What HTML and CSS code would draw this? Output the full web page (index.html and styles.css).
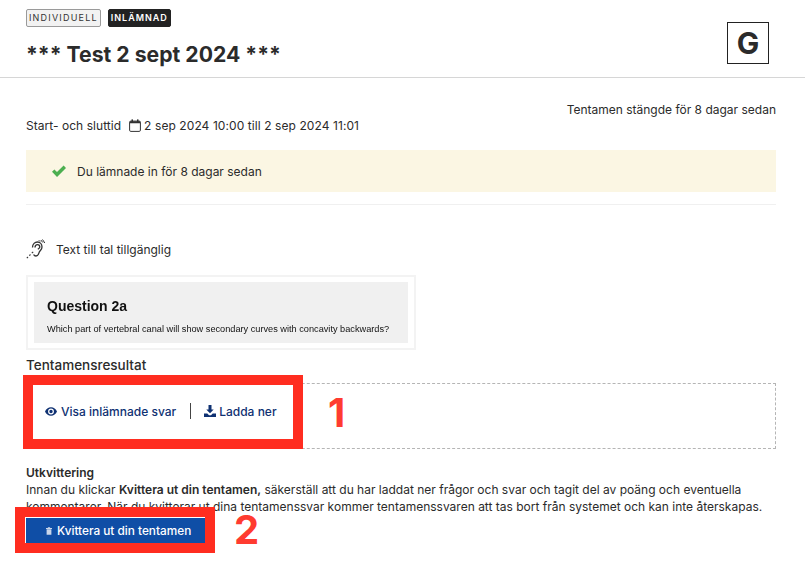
FILE: index.html
```html
<!DOCTYPE html>
<html lang="sv">
<head>
    <meta charset="UTF-8">
    <title>Test 2 sept 2024</title>
    <link rel="stylesheet" href="styles.css">
</head>
<body>
    <header class="header">
        <div class="header-left">
            <div class="tags">
                <span class="tag">INDIVIDUELL</span>
                <span class="tag tag-dark">INLÄMNAD</span>
            </div>
            <h1>*** Test 2 sept 2024 ***</h1>
        </div>
        <div class="grade">G</div>
    </header>

    <main class="content">
        <p class="closed">Tentamen stängde för 8 dagar sedan</p>
        <p class="times">
            <span class="times-label">Start- och sluttid</span>
            <svg class="cal" viewBox="0 0 12 13" width="12" height="13">
                <rect x="0.6" y="2.1" width="10.8" height="10.3" rx="1.2" fill="none" stroke="#333" stroke-width="1"/>
                <path d="M0.6 4.2h10.8V3.2a1 1 0 0 0-1-1H1.6a1 1 0 0 0-1 1z" fill="#333"/>
                <rect x="2.5" y="0.4" width="1.5" height="3" fill="#333"/>
                <rect x="8" y="0.4" width="1.5" height="3" fill="#333"/>
            </svg>
            <span>2 sep 2024 10:00 till 2 sep 2024 11:01</span>
        </p>

        <div class="notice">
            <svg viewBox="0 0 16 13" width="16" height="13">
                <path d="M1 6.800 3.400 4.400 6 7 12.600 0.600 15 3 6 12z" fill="#4caf50"/>
            </svg>
            <span>Du lämnade in för 8 dagar sedan</span>
        </div>

        <div class="tts">
            <svg viewBox="0 0 20 20" width="20" height="20" fill="none" stroke="#333" stroke-width="1.3">
                <path d="M6.500 8.500C6.500 4.800 9 3 11.500 3S16 5 16 8c0 2.600-2 3.400-2.700 5-.7 1.900-1 4-3.300 4-1.200 0-2-.6-2.400-1.500"/>
                <path d="M9 8.500C9 6.700 10.200 5.600 11.600 5.600S13.800 6.800 13.800 8c0 1.200-1.300 1.500-1.800 2.300"/>
                <path d="M0.800 19.200 2 18M3.300 16.700 4.500 15.500M5.800 14.200 7.200 12.800" stroke-width="1.100"/>
                <path d="M14.800 1 16.800 3.500M16.500 0.500 18.800 4M12.800 1.200 14 2.500" stroke-width="1"/>
            </svg>
            <span>Text till tal tillgänglig</span>
        </div>

        <div class="shot">
            <div class="shot-inner">
                <div class="shot-title">Question 2a</div>
                <div class="shot-text">Which part of vertebral canal will show secondary curves with concavity backwards?</div>
            </div>
        </div>

        <h2>Tentamensresultat</h2>
        <div class="results">
            <a href="#" class="res-link">
                <svg viewBox="0 0 14 10" width="12" height="9">
                    <path d="M7 0C3.800 0 1.200 2 0 5c1.200 3 3.800 5 7 5s5.800-2 7-5c-1.200-3-3.800-5-7-5zm0 8.400A3.400 3.400 0 1 1 7 1.600a3.400 3.400 0 0 1 0 6.800zM7 3a2 2 0 1 0 0 4 2 2 0 0 0 0-4z" fill="#0f3172"/>
                </svg>
                Visa inlämnade svar
            </a>
            <span class="sep"></span>
            <a href="#" class="res-link res-link-tight">
                <svg viewBox="0 0 12 12" width="12" height="12">
                    <path d="M4.500 0h3v4.500h2.200L6 8.300 2.300 4.500h2.200zM0 8.500h3.300L5 10.200h2l1.700-1.700H12V12H0z" fill="#0f3172"/>
                </svg>
                Ladda ner
            </a>
        </div>

        <div class="receipt">
            <strong>Utkvittering</strong><br>
            Innan du klickar <strong>Kvittera ut din tentamen,</strong> säkerställ att du har laddat ner frågor och svar och tagit del av poäng och eventuella kommentarer. När du kvitterar ut dina tentamenssvar kommer tentamenssvaren att tas bort från systemet och kan inte återskapas.
        </div>

        <button class="btn">
            <svg viewBox="0 0 8 10" width="6" height="8">
                <path d="M0 1h8v1.200H0zM2.500 0h3v1h-3zM0.800 2.600h6.400V10H0.800z" fill="#c9d6ea"/>
            </svg>
            Kvittera ut din tentamen
        </button>
    </main>

    <!-- annotations drawn on top of the screenshot -->
    <div class="mark mark-1"></div>
    <div class="mark-num num-1">1</div>
    <div class="mark mark-2"></div>
    <div class="mark-num num-2">2</div>
</body>
</html>
```

FILE: styles.css
```css
* {
    margin: 0;
    padding: 0;
    box-sizing: border-box;
}

body {
    font-family: 'Inter', 'Liberation Sans', sans-serif;
    font-size: 12px;
    line-height: 17px;
    color: #2b2b2b;
    background: #fff;
    position: relative;
    height: 561px;
    overflow: hidden;
}

/* Header */
.header {
    height: 78px;
    padding: 9px 36px 0 26px;
    border-bottom: 1px solid #d6d6d6;
    display: flex;
    justify-content: space-between;
    align-items: flex-start;
}

.tags {
    display: flex;
    gap: 7px;
}

.tag {
    height: 18px;
    padding: 0 2px;
    border: 1px solid #9a9a9a;
    border-radius: 2px;
    background: #f2f2f2;
    font-size: 9px;
    line-height: 16px;
    letter-spacing: 1.2px;
    color: #333;
}

.tag-dark {
    background: #222;
    border-color: #222;
    color: #fff;
    font-weight: 600;
    letter-spacing: 1px;
}

h1 {
    font-size: 21.2px;
    line-height: 28px;
    font-weight: 700;
    margin-top: 13px;
    color: #2b2b2b;
}

.grade {
    width: 42px;
    height: 42px;
    margin-top: 13px;
    border: 1px solid #222;
    font-size: 30px;
    font-weight: 700;
    text-align: center;
    line-height: 40px;
}

/* Main */
.content {
    padding: 24px 29px 0 26px;
}

.closed {
    text-align: right;
    line-height: 15px;
}

.times {
    display: flex;
    align-items: center;
    letter-spacing: 0.08px;
}

.times-label {
    letter-spacing: 0.04px;
}

.times .cal {
    margin: 0 3px 0 8px;
}

.notice {
    height: 42px;
    margin-top: 16px;
    padding-left: 25px;
    background: #fbf6e3;
    display: flex;
    align-items: center;
    gap: 10px;
}

.tts {
    margin-top: 12px;
    padding-top: 34px;
    border-top: 1px solid #f0f0f0;
    display: flex;
    align-items: center;
    gap: 10px;
}

.shot {
    width: 390px;
    height: 75px;
    margin-top: 16px;
    padding: 5px 6px;
    border: 2px solid #f3f3f3;
}

.shot-inner {
    height: 61px;
    padding: 15px 13px 0;
    background: #f0f0f0;
    font-family: 'Liberation Sans', sans-serif;
    color: #111;
    filter: blur(0.3px);
}

.shot-title {
    font-size: 14px;
    line-height: 18px;
    font-weight: 700;
}

.shot-text {
    font-size: 9.2px;
    line-height: 12px;
    margin-top: 8px;
    white-space: nowrap;
}

h2 {
    font-size: 13.5px;
    line-height: 18px;
    font-weight: 500;
    margin-top: 6px;
}

.results {
    height: 66px;
    margin-top: 9px;
    padding: 0 18px 10px;
    border: 1px dashed #b5b5b5;
    display: flex;
    align-items: center;
    gap: 14px;
}

.res-link {
    color: #0f3172;
    font-weight: 500;
    text-decoration: none;
    display: flex;
    align-items: center;
    gap: 4px;
}

.res-link-tight {
    gap: 3px;
    margin-left: -1px;
}

.sep {
    width: 1px;
    height: 16px;
    background: #444;
}

.receipt {
    margin-top: 15px;
}

.receipt strong {
    font-weight: 600;
}

.btn {
    width: 180px;
    height: 26px;
    margin: 3px 0 0 -1px;
    padding-left: 20px;
    border: none;
    border-left: 1px solid #fff;
    background: #0f4ea6;
    color: #fff;
    font-family: inherit;
    font-size: 11.8px;
    font-weight: 500;
    display: flex;
    align-items: center;
    gap: 5px;
}

/* Red annotations */
.mark {
    position: absolute;
    border: 10px solid #ff2d20;
}

.mark-1 {
    left: 23px;
    top: 375px;
    width: 280px;
    height: 74px;
}

.mark-2 {
    left: 15px;
    top: 507px;
    width: 200px;
    height: 46px;
}

.mark-num {
    position: absolute;
    color: #ff3b30;
    font-size: 40px;
    line-height: 40px;
    font-weight: 700;
}

.num-1 {
    left: 328px;
    top: 393px;
}

.num-2 {
    left: 234px;
    top: 510px;
}
```
